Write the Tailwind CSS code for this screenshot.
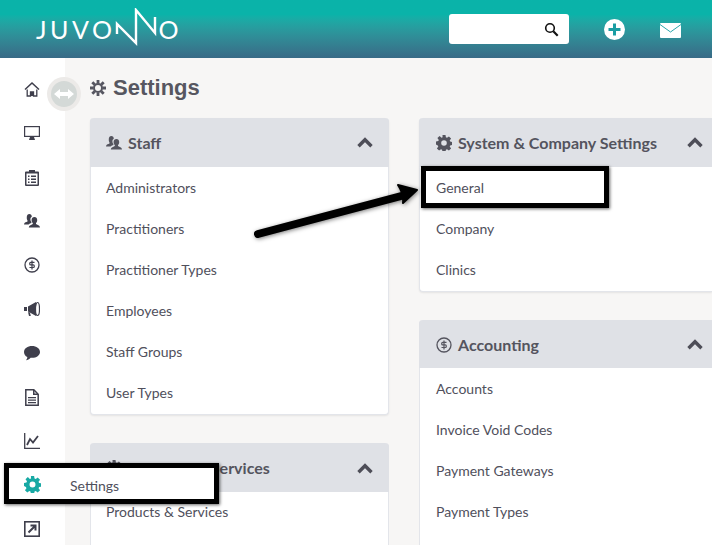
<!DOCTYPE html>
<html>
<head>
<meta charset="utf-8">
<script src="https://cdn.jsdelivr.net/npm/@tailwindcss/browser@4"></script>
</head>
<body class="m-0">
<svg width="0" height="0" class="absolute">
  <defs>
    <symbol id="gear" viewBox="0 0 16 16"><path fill-rule="evenodd" d="M6.500 0h3l.4 2.300 1.100.5 1.900-1.400 2.200 2.200-1.400 1.900.5 1.100 2.300.4v3l-2.300.4-.5 1.100 1.400 1.900-2.200 2.200-1.900-1.400-1.100.5-.4 2.300h-3l-.4-2.300-1.100-.5-1.900 1.400-2.200-2.200 1.400-1.900-.5-1.100L0 9.500v-3l2.300-.4.500-1.100-1.400-1.900 2.200-2.200L5.500 2.800l1.100-.5zM8 5.200a2.800 2.800 0 1 0 0 5.600 2.800 2.800 0 0 0 0-5.600z"/></symbol>
    <symbol id="gearo" viewBox="0 0 16 16"><circle cx="8" cy="8" r="4" fill="none" stroke="currentColor" stroke-width="2"/><path stroke="currentColor" stroke-width="2.800" d="M8 0v3.500M8 12.500V16M0 8h3.500M12.500 8H16M2.300 2.300l2.500 2.500M11.200 11.200l2.500 2.500M13.700 2.300l-2.500 2.500M4.800 11.200l-2.500 2.500"/></symbol>
    <symbol id="users" viewBox="0 0 16 16"><path d="M5.300 1c1.500 0 2.600 1.100 2.500 2.800-.9.500-1.400 1.500-1.400 2.700 0 1 .4 1.900 1 2.500v1c-1 .3-2 .7-2.800 1.500H0c.1-1.400 1.200-2.100 2.400-2.500l1.100-.5v-1C2.900 6.800 2.700 5.600 2.800 3.800 2.900 2.100 3.800 1 5.300 1z"/><path d="M10.400 4c1.700 0 2.800 1.200 2.800 3 0 1.300-.4 2.400-1.200 3v1.100l1.400.6c1.400.5 2.500 1.200 2.600 2.800H4.800c.1-1.600 1.200-2.300 2.600-2.800l1.400-.6V10c-.8-.6-1.200-1.700-1.200-3 0-1.800 1.100-3 2.800-3z"/></symbol>
    <symbol id="dollar" viewBox="0 0 16 16"><circle cx="8" cy="8" r="7" fill="none" stroke="currentColor" stroke-width="1.300"/><path fill="none" stroke="currentColor" stroke-width="1.200" d="M10.500 5.400H6.800c-1.500 0-1.500 2.500 0 2.500h2.400c1.500 0 1.500 2.600 0 2.600H5.500M8 3.500v9"/></symbol>
    <symbol id="chev" viewBox="0 0 16 11"><path fill="none" stroke="currentColor" stroke-width="3.400" d="M1.500 9.200 8 2.700l6.500 6.500"/></symbol>
  </defs>
</svg>

<div class="relative w-[712px] h-[545px] overflow-hidden bg-[#f7f6f5] font-['Lato','Noto_Sans',sans-serif] text-[#4e4e58]">
  <header class="h-[58px] bg-gradient-to-b from-[#0ab3a9] from-[25%] to-[#386a86] flex items-center justify-between">
    <div class="pl-[36px] flex items-center text-white text-[25px] tracking-[3.500px] leading-none font-normal font-['Lato',sans-serif] h-full">
      <span>JUVO</span><svg width="46" height="40" viewBox="0 0 46 40" class="-ml-[2px] -mr-[1px] -mt-[2px]"><path fill="none" stroke="#fff" stroke-width="2.400" d="M4 26V16L23 35V2L42 25V9" stroke-linejoin="miter"/></svg><span>O</span>
    </div>
    <div class="flex items-center pr-[31px]">
      <div class="w-[120px] h-[30px] bg-white rounded-[3px] flex items-center justify-end pr-[10px]">
        <svg width="15" height="15" viewBox="0 0 15 15"><circle cx="6" cy="6" r="4.300" fill="none" stroke="#111" stroke-width="1.600"/><path d="m9.300 9.300 4.400 4.400" stroke="#111" stroke-width="2.200"/></svg>
      </div>
      <svg width="21" height="21" viewBox="0 0 21 21" class="ml-[35px]"><circle cx="10.500" cy="10.500" r="10.500" fill="#fff"/><path d="M10.500 4.500v12M4.500 10.500h12" stroke="#1a9da3" stroke-width="3"/></svg>
      <svg width="21" height="15" viewBox="0 0 21 15" class="ml-[35px] mt-[2px]"><rect width="21" height="15" rx="1" fill="#fff"/><path d="M0 1.500 10.500 9 21 1.500" fill="none" stroke="#2aa5aa" stroke-width="1"/></svg>
    </div>
  </header>

  <div class="flex h-[487px]">
    <aside class="w-[65px] shrink-0 bg-white flex flex-col items-center pt-[23px] text-[#3f3f4c]">
      <div class="h-[44px] w-full pl-[24px]"><svg width="16" height="16" viewBox="0 0 16 16"><path d="M8 1 .5 8l1 1L8 3l6.500 6 1-1z" fill="currentColor"/><path d="M3.200 8.500V15h3.300v-4h3v4h3.300V8.500" fill="none" stroke="currentColor" stroke-width="1.300"/><path d="M6.500 11h3v4h-3z" fill="currentColor"/></svg></div>
      <div class="h-[44px] w-full pl-[24px]"><svg width="16" height="16" viewBox="0 0 16 16"><rect x=".6" y="1.600" width="14.800" height="9.800" fill="none" stroke="currentColor" stroke-width="1.200"/><path d="M5 15l1-3h4l1 3z" fill="currentColor"/></svg></div>
      <div class="h-[44px] w-full pl-[25px]"><svg width="14" height="17" viewBox="0 0 14 17"><path fill-rule="evenodd" fill="currentColor" d="M1 2.500h3V1h6v1.500h3a1 1 0 0 1 1 1V16a1 1 0 0 1-1 1H1a1 1 0 0 1-1-1V3.500a1 1 0 0 1 1-1zm.5 2V15.500h11V4.500zM3 6.500h1.500V8H3zm3 0h5V8H6zM3 9.500h1.500V11H3zm3 0h5V11H6zM3 12.500h1.500V14H3zm3 0h5V14H6z"/></svg></div>
      <div class="h-[44px] w-full pl-[24px]"><svg width="16" height="16"><use href="#users" fill="currentColor"/></svg></div>
      <div class="h-[44px] w-full pl-[24px]"><svg width="16" height="16"><use href="#dollar"/></svg></div>
      <div class="h-[44px] w-full pl-[24px]"><svg width="16" height="16" viewBox="0 0 16 16"><path fill="currentColor" d="M0 6h3v4H0zM4 5.500 12 1v14L4 10.500zM4 11l2 .800.800 3.200H5z"/><ellipse cx="13.500" cy="8" rx="2" ry="6.500" fill="none" stroke="currentColor" stroke-width="1.200"/></svg></div>
      <div class="h-[44px] w-full pl-[24px]"><svg width="16" height="16" viewBox="0 0 16 16"><path fill="currentColor" d="M8 1c4.400 0 8 2.500 8 5.900s-3.600 5.900-8 5.900l-1.400-.1C5.500 14.300 3.500 15.200 2 15.200c.8-.8 1.300-1.800 1.300-3.100C1.300 11 0 9 0 6.900 0 3.500 3.600 1 8 1z"/></svg></div>
      <div class="h-[44px] w-full pl-[25px]"><svg width="14" height="17" viewBox="0 0 14 17"><path fill="none" stroke="currentColor" stroke-width="1.500" d="M.8.800h8l4.400 4.400v11H.8z"/><path fill="currentColor" d="M8 1h1.500v3.500H13V6H8zM3 8h8v1.200H3zm0 2.500h8v1.200H3zM3 13h8v1.200H3z"/></svg></div>
      <div class="h-[44px] w-full pl-[24px]"><svg width="16" height="16" viewBox="0 0 16 16"><path fill="none" stroke="currentColor" stroke-width="1.300" d="M.7 0v15.300H16"/><path fill="none" stroke="currentColor" stroke-width="1.800" d="M3 12l3-6 3 3.500L14 3"/></svg></div>
      <div class="h-[44px] w-full"></div>
      <div class="w-full pl-[24px]"><svg width="16" height="16" viewBox="0 0 16 16"><rect x=".8" y=".8" width="14.400" height="14.400" fill="none" stroke="currentColor" stroke-width="1.600"/><path d="M4.500 11.500 11 5M6.500 4.500h5v5" fill="none" stroke="currentColor" stroke-width="2"/></svg></div>
    </aside>

    <main class="flex-1 pl-[25px] pt-[17px]">
      <h1 class="flex items-center h-[26px] text-[22px] leading-none font-bold font-['Liberation_Sans',sans-serif] text-[#565660]">
        <svg width="16" height="16" class="mr-[7px]"><use href="#gearo"/></svg>Settings
      </h1>
      <div class="flex gap-[30px] mt-[17px] items-start">
        <div class="w-[299px] shrink-0 flex flex-col gap-[28px]">
          <section class="bg-white rounded-[4px] border border-[#e3e5ea] border-t-0 shadow-[0_1px_2px_rgba(0,0,0,0.08)]">
            <div class="h-[49px] -mx-px bg-[#dfe1e6] rounded-t-[4px] flex items-center justify-between pl-[16px] pr-[16px]">
              <span class="flex items-center gap-[6px] text-[16px] font-bold text-[#54545e]"><svg width="16" height="16"><use href="#users" fill="currentColor"/></svg>Staff</span>
              <svg width="16" height="11"><use href="#chev"/></svg>
            </div>
            <ul class="text-[14px] text-[#50505c] pb-[1px]">
              <li class="h-[41px] flex items-center pl-[15px]">Administrators</li>
              <li class="h-[41px] flex items-center pl-[15px]">Practitioners</li>
              <li class="h-[41px] flex items-center pl-[15px]">Practitioner Types</li>
              <li class="h-[41px] flex items-center pl-[15px]">Employees</li>
              <li class="h-[41px] flex items-center pl-[15px]">Staff Groups</li>
              <li class="h-[41px] flex items-center pl-[15px]">User Types</li>
            </ul>
          </section>
          <section class="bg-white rounded-[4px] border border-[#e3e5ea] border-t-0">
            <div class="h-[49px] -mx-px bg-[#dfe1e6] rounded-t-[4px] flex items-center justify-between pl-[16px] pr-[16px] pt-[1px]">
              <span class="flex items-center gap-[6px] text-[16px] font-bold text-[#54545e]"><svg width="16" height="16"><use href="#gear" fill="currentColor"/></svg>Products &amp; Services</span>
              <svg width="16" height="11"><use href="#chev"/></svg>
            </div>
            <ul class="text-[14px] text-[#50505c] pb-[40px]">
              <li class="h-[39px] flex items-center pl-[15px]">Products &amp; Services</li>
            </ul>
          </section>
        </div>
        <div class="w-[293px] shrink-0 flex flex-col gap-[28px]">
          <section class="bg-white rounded-l-[4px] border-l border-b border-[#e3e5ea] shadow-[0_1px_2px_rgba(0,0,0,0.08)]">
            <div class="h-[49px] -ml-px bg-[#dfe1e6] rounded-tl-[4px] flex items-center justify-between pl-[17px] pr-[9px]">
              <span class="flex items-center gap-[6px] text-[16px] font-bold text-[#54545e]"><svg width="16" height="16"><use href="#gear" fill="currentColor"/></svg>System &amp; Company Settings</span>
              <svg width="16" height="11"><use href="#chev"/></svg>
            </div>
            <ul class="text-[14px] text-[#50505c] pb-[1px]">
              <li class="h-[41px] flex items-center pl-[16px]">General</li>
              <li class="h-[41px] flex items-center pl-[16px]">Company</li>
              <li class="h-[41px] flex items-center pl-[16px]">Clinics</li>
            </ul>
          </section>
          <section class="bg-white rounded-l-[4px] border-l border-[#e3e5ea]">
            <div class="h-[48px] -ml-px bg-[#dfe1e6] rounded-tl-[4px] flex items-center justify-between pl-[17px] pr-[9px] pt-[2px]">
              <span class="flex items-center gap-[6px] text-[16px] font-bold text-[#54545e]"><svg width="16" height="16"><use href="#dollar"/></svg>Accounting</span>
              <svg width="16" height="11" class="-mt-[2px]"><use href="#chev"/></svg>
            </div>
            <ul class="text-[14px] text-[#50505c] pb-[40px]">
              <li class="h-[41px] flex items-center pl-[16px]">Accounts</li>
              <li class="h-[41px] flex items-center pl-[16px]">Invoice Void Codes</li>
              <li class="h-[41px] flex items-center pl-[16px]">Payment Gateways</li>
              <li class="h-[41px] flex items-center pl-[16px]">Payment Types</li>
            </ul>
          </section>
        </div>
      </div>
    </main>
  </div>

  <!-- sidebar toggle -->
  <div class="absolute left-[47px] top-[77px] w-[34px] h-[34px] rounded-full bg-[#eceae8] flex items-center justify-center">
    <div class="w-[26px] h-[26px] rounded-full bg-[#d4d9d7] flex items-center justify-center">
      <svg width="20" height="12" viewBox="0 0 20 12"><path fill="#fff" d="M0 6l6-5v3h8V1l6 5-6 5V8H6v3z"/></svg>
    </div>
  </div>

  <!-- annotations -->
  <div class="absolute left-[421px] top-[166px] w-[188px] h-[42px] border-[5px] border-black shadow-[1px_1px_3px_rgba(0,0,0,0.6)]"></div>
  <div class="absolute left-[4px] top-[463px] w-[215px] h-[41px] border-[5px] border-black bg-white shadow-[1px_1px_3px_rgba(0,0,0,0.6)] flex items-center pl-[15px] text-[#50505c]">
    <svg width="17" height="17" class="text-[#18a9a4] shrink-0 mt-[1px]"><use href="#gear" fill="currentColor"/></svg>
    <span class="ml-[29px] text-[14px] mt-[3px]">Settings</span>
  </div>
  <svg class="absolute left-[250px] top-[180px] drop-shadow-[1px_1px_2px_rgba(0,0,0,0.5)]" width="175" height="65" viewBox="0 0 175 65">
    <path d="M8 54 155 15" fill="none" stroke="#000" stroke-width="8" stroke-linecap="round"/>
    <path d="M148 5 167 10 153 23 Q154 14 148 5z" fill="#000" stroke="#000" stroke-width="2" stroke-linejoin="round"/>
  </svg>
</div>
</body>
</html>
